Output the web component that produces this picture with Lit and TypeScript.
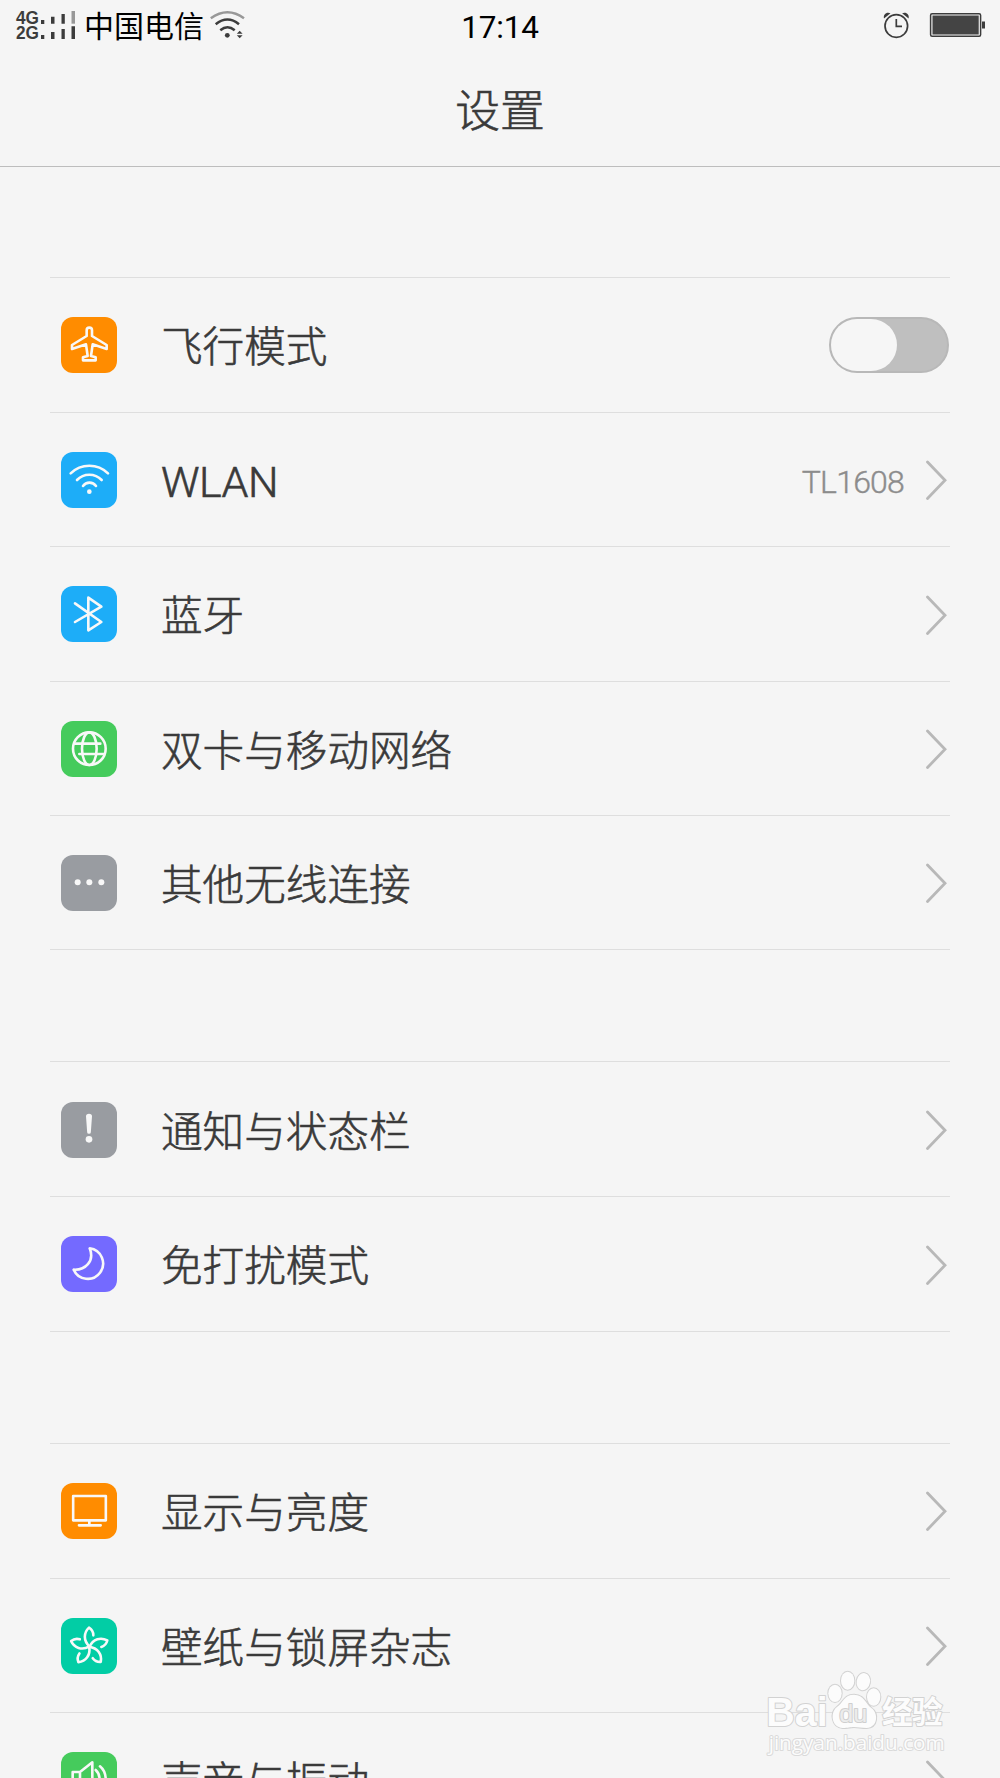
import { LitElement, html, svg, css, nothing } from "lit";
import { customElement, property } from "lit/decorators.js";

type Row = { icon: string; tone: string; label: string; value?: string; latin?: boolean; toggle?: boolean };

const groups: Row[][] = [
  [
    { icon: "plane", tone: "orange", label: "飞行模式", toggle: true },
    { icon: "wifi", tone: "blue", label: "WLAN", value: "TL1608", latin: true },
    { icon: "bluetooth", tone: "blue", label: "蓝牙" },
    { icon: "globe", tone: "green", label: "双卡与移动网络" },
    { icon: "dots", tone: "gray", label: "其他无线连接" },
  ],
  [
    { icon: "alert", tone: "gray", label: "通知与状态栏" },
    { icon: "moon", tone: "purple", label: "免打扰模式" },
  ],
  [
    { icon: "display", tone: "orange", label: "显示与亮度" },
    { icon: "flower", tone: "teal", label: "壁纸与锁屏杂志" },
    { icon: "sound", tone: "green", label: "声音与振动" },
  ],
];

const glyphs: Record<string, unknown> = {
  plane: svg`<path d="M77 57V40a8 8 0 0 1 16 0V57L137 84V96L95 82L90 117L104 121V130H66V121L80 117L75 82L33 96V84Z"/>`,
  wifi: svg`<path d="M29 64A80 80 0 0 1 141 64M48 84A51 51 0 0 1 122 84M66 102A24 24 0 0 1 105 102"/><circle class="solid" cx="85" cy="119" r="7"/>`,
  bluetooth: svg`<path d="M42 52L121 108L82 133V35L121 62L42 108"/>`,
  globe: svg`<circle cx="85" cy="83" r="49"/><ellipse cx="85" cy="83" rx="22" ry="49"/><path d="M42 68H118M55 99H128"/>`,
  dots: svg`<g class="solid"><circle cx="50" cy="82" r="9"/><circle cx="85" cy="82" r="9"/><circle cx="121" cy="82" r="9"/></g>`,
  alert: svg`<path class="solid" d="M75 43a9 8 0 0 1 18 0L89.500 91a5.500 4.500 0 0 1-11 0Z"/><circle class="solid" cx="84" cy="112" r="10"/>`,
  moon: svg`<path d="M86 37A46 46 0 1 1 38 101C72 103 102 76 86 37Z"/>`,
  display: svg`<rect x="36.500" y="39" width="98" height="73"/><path d="M85 112V124M54 127H119" stroke-width="8"/>`,
  flower: svg`${[0, 72, 144, 216, 288].map(
    (a) => svg`<path transform="rotate(${a} 85 86)" d="M86 86C66 68 68 44 84 29C92 34 97 42 97 52"/>`,
  )}`,
  sound: svg`<path d="M35 60H57L94 31V137L57 108H35ZM57 60V108M104 54C120 68 120 100 104 114M117 43C140 62 140 106 117 125"/>`,
};

@customElement("setting-row")
class SettingRow extends LitElement {
  @property({ attribute: false }) row!: Row;

  static styles = css`
    :host { display: flex; align-items: center; height: 134.350px; box-sizing: border-box; border-bottom: 1px solid #dedede; padding-left: 11px; }
    .tile { width: 56px; height: 56px; border-radius: 12px; flex: none; margin-top: 0.400px; }
    .tile svg { display: block; width: 56px; height: 56px; fill: none; stroke: #f8f8f8; stroke-width: 7.800; stroke-linecap: round; stroke-linejoin: round; }
    .tile .solid { fill: #f8f8f8; stroke: none; }
    .orange { background: #ff8c00; }
    .blue { background: #1dadf8; }
    .green { background: #45cb5c; }
    .gray { background: #999ca1; }
    .purple { background: #746aff; }
    .teal { background: #02cda5; }
    .label { margin: 0 0 1.500px 44px; flex: 1; font-size: 41.600px; line-height: 60px; color: #3a3a3a; white-space: nowrap; -webkit-text-stroke: 0.600px #3a3a3a; }
    .latin { font-family: Roboto, sans-serif; font-size: 43px; letter-spacing: -0.500px; padding-top: 6px; }
    .value { font-family: Roboto, sans-serif; font-size: 32px; letter-spacing: -0.800px; line-height: 44px; color: #8c8c8c; margin-right: 21px; padding-top: 5px; -webkit-text-stroke: 0.400px #8c8c8c; }
    .arrow { width: 22px; height: 40px; margin: 1px 3px 0 0; fill: none; stroke: #b8b8b8; stroke-width: 2.800; stroke-linecap: round; }
    .switch { box-sizing: border-box; width: 120px; height: 56px; border-radius: 28px; background: #bfbfbf; border: 2.500px solid #b8b8b8; margin-right: 1px; display: flex; }
    .knob { width: 66px; height: 100%; border-radius: 26px; background: #f6f6f6; }
  `;

  render() {
    const r = this.row;
    return html`
      <div class="tile ${r.tone}"><svg viewBox="0 0 168 168">${glyphs[r.icon]}</svg></div>
      <span class="label ${r.latin ? "latin" : ""}">${r.label}</span>
      ${r.value ? html`<span class="value">${r.value}</span>` : nothing}
      ${r.toggle
        ? html`<div class="switch"><div class="knob"></div></div>`
        : html`<svg class="arrow" viewBox="0 0 22 40"><path d="M2.500 2L20 20.300L2.500 38.500"/></svg>`}
    `;
  }
}

@customElement("app-root")
class AppRoot extends LitElement {
  static styles = css`
    :host { display: block; position: relative; width: 1000px; height: 1778px; overflow: hidden; background: #f5f5f5; font-family: "Noto Sans CJK SC", sans-serif; font-weight: 300; }
    .status { height: 50px; display: grid; grid-template-columns: 1fr auto 1fr; grid-template-rows: 50px; align-items: center; }
    .left, .right { display: flex; align-items: center; height: 50px; }
    .signal { width: 84px; height: 50px; font: bold 17.500px "Liberation Sans", sans-serif; fill: #3c3c3c; }
    .carrier { font-size: 30px; line-height: 50px; color: #000; font-weight: 400; margin-top: -2px; }
    .wifi { width: 40px; height: 50px; margin-left: 4px; }
    .time { font-family: Roboto, sans-serif; font-size: 31.500px; letter-spacing: -0.200px; line-height: 50px; color: #000; font-weight: 400; padding-top: 6px; }
    .right { justify-content: flex-end; }
    .right svg { width: 130px; height: 50px; }
    .title { height: 117px; box-sizing: border-box; display: flex; align-items: center; justify-content: center; font-size: 44.800px; line-height: 60px; color: #3a3a3a; border-bottom: 1px solid #bdbdbd; margin: 0; font-weight: 300; -webkit-text-stroke: 0.600px #3a3a3a; }
    .list { padding: 110px 50px 0; display: flex; flex-direction: column; gap: 111px; }
    .group { border-top: 1px solid #dedede; }
    .group setting-row:first-child { height: 135px; }
    .mark { position: absolute; left: 740px; top: 1640px; width: 260px; height: 138px; }
  `;

  render() {
    return html`
      <header class="status">
        <div class="left">
          <svg class="signal" viewBox="0 0 84 50">
            <text x="16" y="23.500" textLength="23" lengthAdjust="spacingAndGlyphs">4G</text>
            <text x="16" y="38.900" textLength="23" lengthAdjust="spacingAndGlyphs">2G</text>
            <path d="M41 20h3.300v4H41zM51 16.700h3.500v7H51zM61.500 14h3.300v9.700h-3.300zM41 35h3.300v4H41zM51 32h3.500v7H51zM61.500 29h3.300v10h-3.300zM71.500 26.300H75V39h-3.500z"/>
            <path fill="#989898" d="M71.500 11H75v12.700h-3.500z"/>
          </svg>
          <span class="carrier">中国电信</span>
          <svg class="wifi" viewBox="208 0 40 50" fill="none" stroke="#3c3c3c" stroke-width="2.500">
            <path stroke="#989898" d="M210.800 18.300Q227.500 6.300 244 18.300"/>
            <path d="M215.700 24.200Q227.500 14.800 239 24.200M220.300 30.300Q227.500 24.300 234.700 30.300"/>
            <circle cx="227.300" cy="35.300" r="2.400" fill="#3c3c3c" stroke="none"/>
            <path fill="#3c3c3c" stroke="none" d="M236.800 33.700L239.700 30.700L242.600 33.700ZM236.800 35.300L239.700 38.300L242.600 35.300Z"/>
          </svg>
        </div>
        <span class="time">17:14</span>
        <div class="right">
          <svg viewBox="0 0 130 50" fill="none" stroke="#3c3c3c">
            <circle cx="26.300" cy="26" r="11.300" stroke-width="1.700"/>
            <path d="M26.300 19V26.300H32" stroke-width="1.700"/>
            <path fill="#3c3c3c" stroke="none" d="M14 18.500C13 14.500 16.500 11.500 20.500 13.300ZM38.600 18.500C39.600 14.500 36.100 11.500 32.100 13.300Z"/>
            <rect x="60.600" y="13.700" width="50" height="22.600" rx="1.500" stroke-width="1.500"/>
            <rect x="62.500" y="15.500" width="46.200" height="19" fill="#444" stroke="none"/>
            <rect x="112" y="21.500" width="3" height="7" fill="#3c3c3c" stroke="none"/>
          </svg>
        </div>
      </header>
      <h1 class="title">设置</h1>
      <main class="list">
        ${groups.map((g) => html`<section class="group">${g.map((r) => html`<setting-row .row=${r}></setting-row>`)}</section>`)}
      </main>
      <svg class="mark" viewBox="0 0 780 414" fill="#fcfcfc" stroke="#d2d2d2" stroke-width="6" paint-order="stroke" stroke-linejoin="round">
        <text x="79" y="259" font-family="Liberation Sans, sans-serif" font-weight="700" font-size="120" textLength="184" lengthAdjust="spacingAndGlyphs">Bai</text>
        <ellipse cx="285" cy="160" rx="20" ry="26"/>
        <ellipse cx="323" cy="122" rx="20" ry="27"/>
        <ellipse cx="370" cy="125" rx="20" ry="26" transform="rotate(10 370 125)"/>
        <ellipse cx="401" cy="171" rx="20" ry="26"/>
        <path d="M342 164C312 164 310 188 290 202C270 218 274 262 308 264C325 264 330 261 342 261C354 261 364 264 380 264C414 262 416 220 394 204C376 190 372 164 342 164Z"/>
        <text x="298" y="247" font-family="Liberation Sans, sans-serif" font-size="74" textLength="84" lengthAdjust="spacingAndGlyphs" fill="#ececec" stroke="#cfcfcf">du</text>
        <text x="426" y="250" font-family="Noto Sans CJK SC, sans-serif" font-weight="700" font-size="92" textLength="182">经验</text>
        <text x="86" y="331" font-family="Open Sans, sans-serif" font-weight="400" font-size="59" textLength="528" lengthAdjust="spacingAndGlyphs" stroke="#dadada">jingyan.baidu.com</text>
      </svg>
    `;
  }
}
